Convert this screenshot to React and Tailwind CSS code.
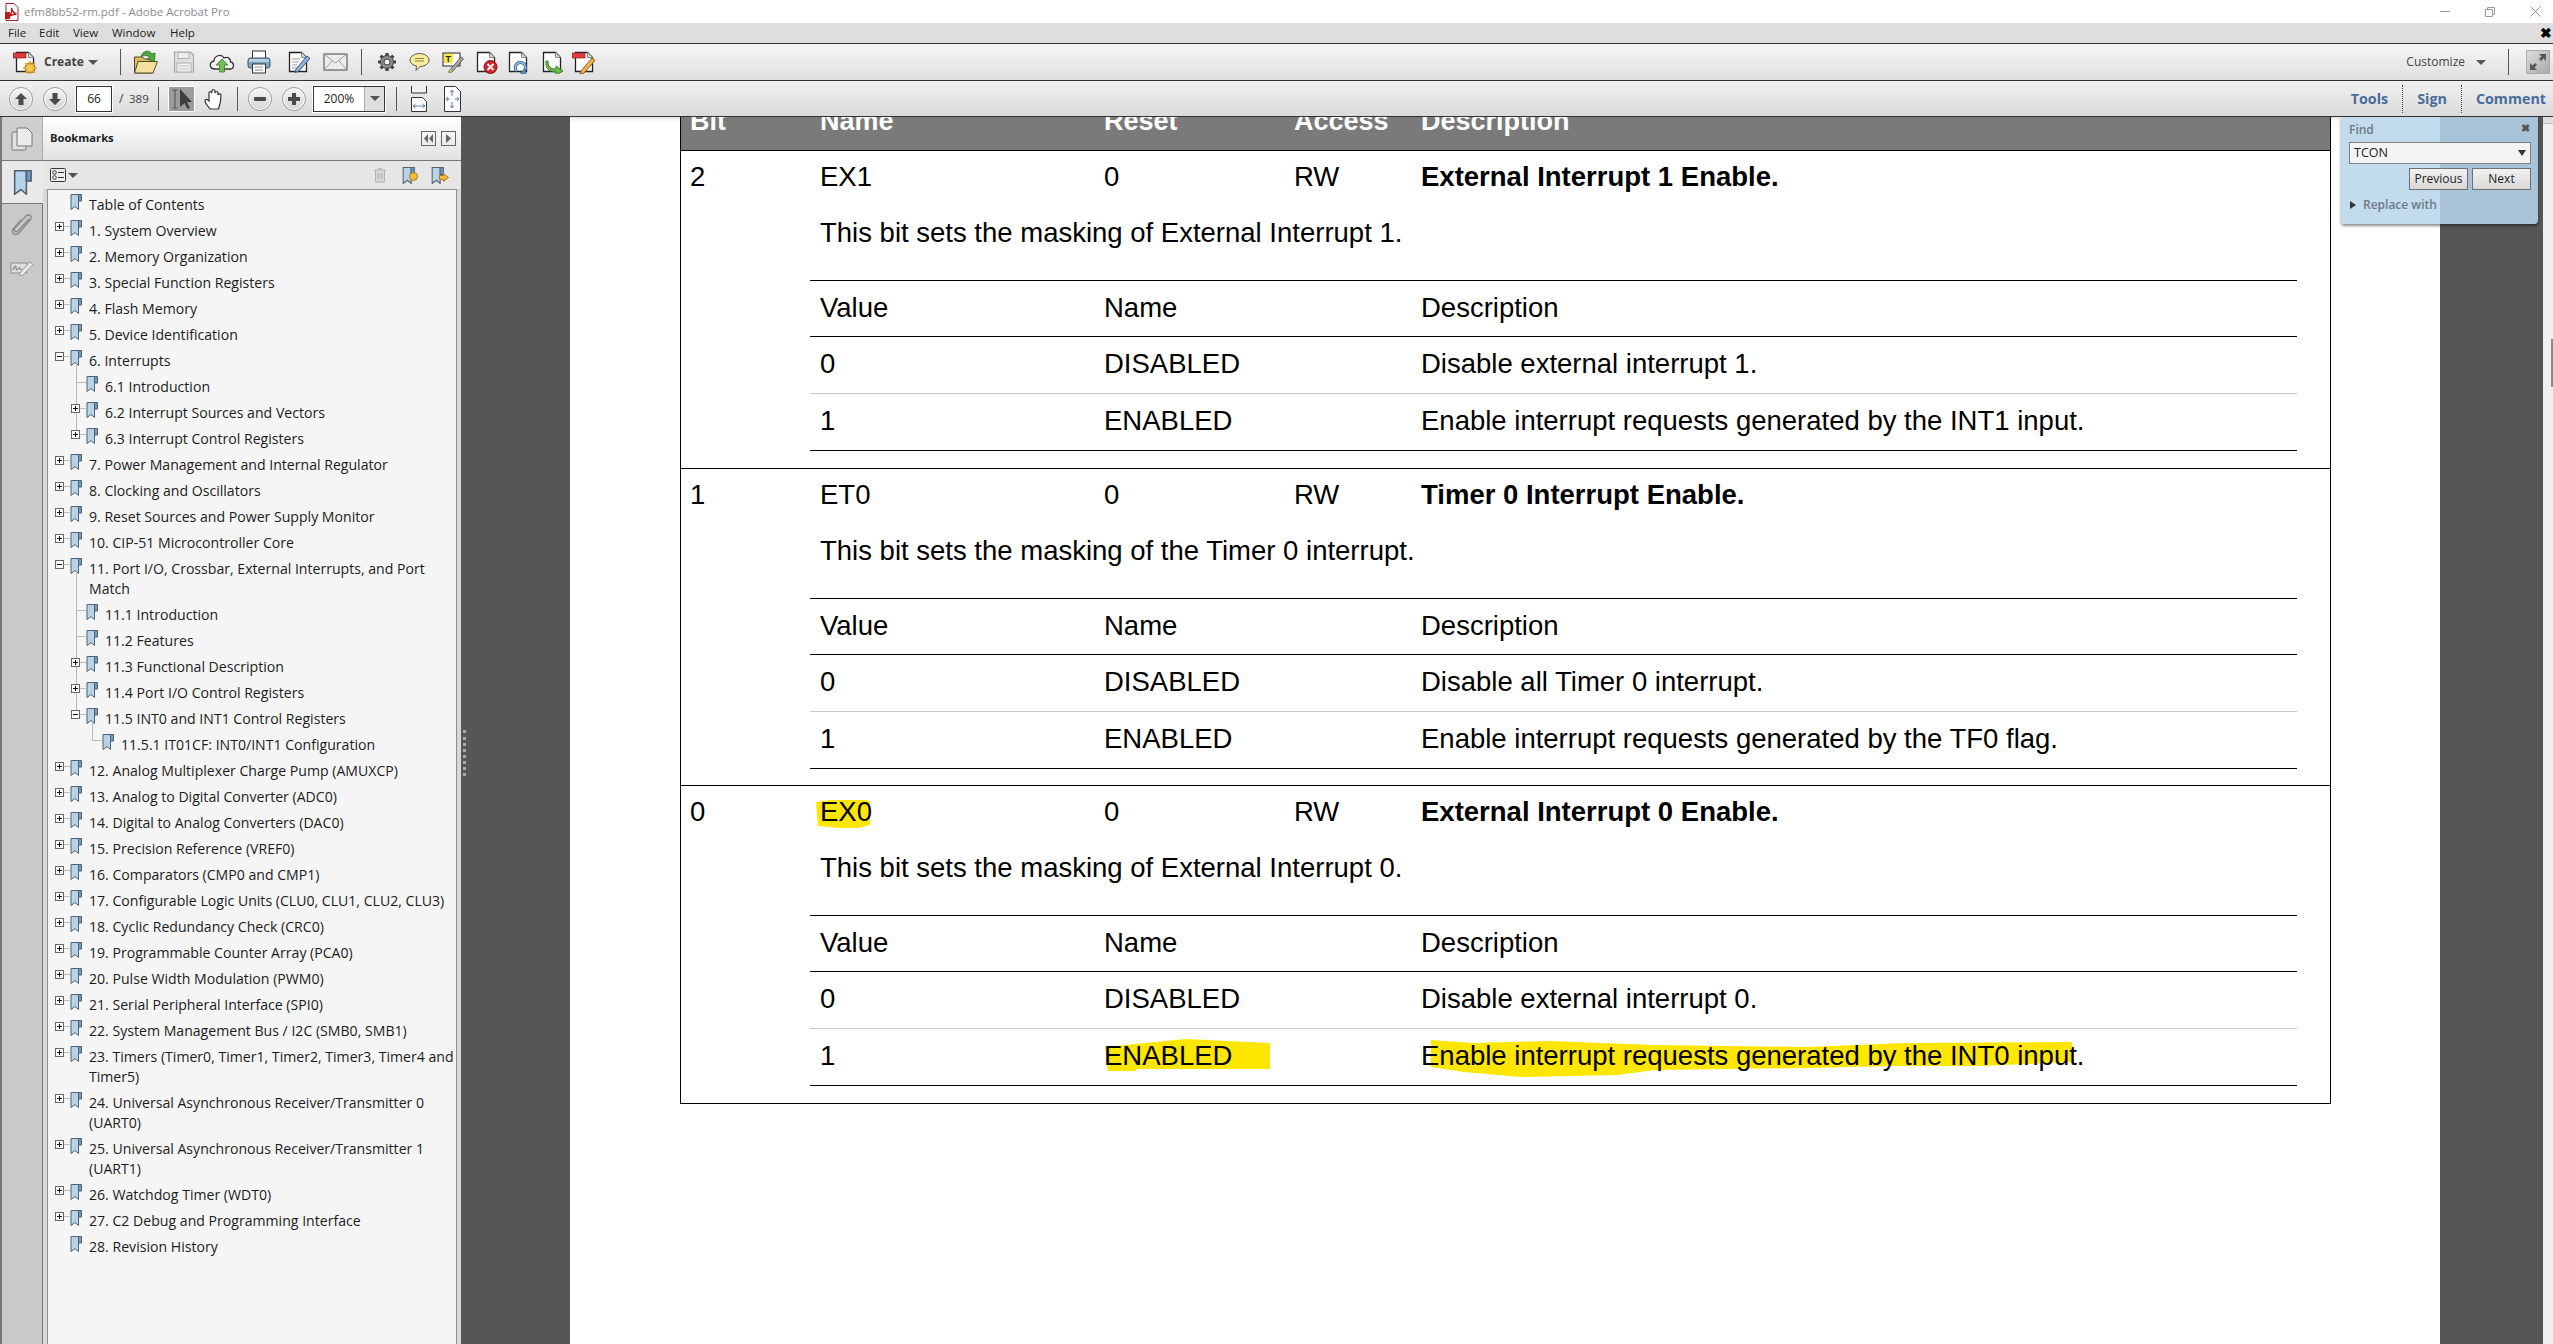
import React from 'react';

const ui = "font-['Open_Sans','Noto_Sans',sans-serif]";

const Doc = ({ children, w = 24, h = 24, className = '' }) => (
  <svg width={w} height={h} viewBox="0 0 24 24" className={className}>
    <path d="M3.5 2.5h12l5 5v14h-17z" fill="#fff" stroke="#222" strokeWidth="1.3" />
    <path d="M15.5 2.5v5h5" fill="#ddd" stroke="#888" strokeWidth="1" />
    {children}
  </svg>
);

const PdfLogo = () => (
  <svg width="14" height="18" viewBox="0 0 14 18">
    <path d="M1 .5h8l4 4v13H1z" fill="#fff" stroke="#a02020" />
    <path d="M3 14c3-2 4-6 3.5-9 .6 3 2 5 5 6-3 0-5 1-8.500 3z" fill="none" stroke="#c01818" strokeWidth="1.300" />
    <rect x="0" y="9" width="5" height="7" fill="#b81c1c" />
  </svg>
);

const CreateIcon = () => (
  <Doc>
    <rect x="0" y="3" width="13" height="5" fill="#e23b3b" stroke="#8a1d1d" strokeWidth=".7" />
    <circle cx="17" cy="18" r="5" fill="#e9a92c" stroke="#9a6a10" />
    <path d="M17 11v14M10 18h14M12 13l10 10M22 13 12 23" stroke="#e9a92c" strokeWidth="1.500" />
    <circle cx="17" cy="18" r="3.500" fill="#f5c556" />
  </Doc>
);

const FolderIcon = () => (
  <svg width="26" height="26" viewBox="0 0 26 26">
    <path d="M1.500 8h8l2 2h8v14H1.500z" fill="#d9b96a" stroke="#5b4a22" />
    <path d="M1.500 24 5 12.500h19.500L20 24z" fill="#f3dfa0" stroke="#5b4a22" />
    <path d="M8 8c1-6 8-8 11-3l3-1-.500 9-7.500-3 2.500-1.500C15 6 11 6 8 8z" fill="#4fa63a" stroke="#2c6b20" strokeWidth=".8" />
  </svg>
);

const SaveIcon = () => (
  <svg width="22" height="24" viewBox="0 0 22 24">
    <path d="M1.500 2h16l3 3v17h-19z" fill="#dedede" stroke="#a8a8a8" strokeWidth="1.200" />
    <rect x="5" y="2.500" width="11" height="6" fill="#eee" stroke="#b0b0b0" />
    <rect x="4" y="13" width="14" height="9" fill="#eee" stroke="#b0b0b0" />
    <path d="M6 16h10M6 19h10" stroke="#c4c4c4" />
  </svg>
);

const CloudIcon = () => (
  <svg width="26" height="22" viewBox="0 0 26 22">
    <path d="M6 18c-6 0-6-7-1-8 0-5 7-8 10-3 4-2 7 1 6.500 4 4 .5 4 7-.5 7z" fill="#f4f4f4" stroke="#333" strokeWidth="1.300" />
    <path d="M13 8l6 6h-3.500v7h-5v-7H7z" fill="#6fc04f" stroke="#3b7d28" strokeWidth=".8" />
  </svg>
);

const PrintIcon = () => (
  <svg width="24" height="24" viewBox="0 0 24 24">
    <rect x="5.500" y="1" width="13" height="8" fill="#fff" stroke="#333" />
    <rect x="1" y="8" width="22" height="10" rx="2.500" fill="#7ea4c4" stroke="#38536c" />
    <rect x="2" y="9" width="20" height="3" rx="1" fill="#b7cfe2" />
    <rect x="5.500" y="14" width="13" height="9" fill="#fff" stroke="#333" />
    <path d="M8 17h8M8 20h8" stroke="#888" />
  </svg>
);

const EditDocIcon = () => (
  <Doc>
    <path d="M6 9h8M6 12h6M6 15h5M6 18h5" stroke="#999" />
    <path d="M10 19 21 6l3 2.500L13 21l-4 1.500z" fill="#8db4d8" stroke="#2d4f72" strokeWidth=".9" />
  </Doc>
);

const MailIcon = () => (
  <svg width="25" height="20" viewBox="0 0 25 20">
    <rect x="1" y="2" width="23" height="16" fill="#ededed" stroke="#444" />
    <path d="m1 2 11.500 9L24 2M1 18l8-9M24 18l-8-9" fill="none" stroke="#9a9a9a" />
  </svg>
);

const GearIcon = () => (
  <svg width="20" height="22" viewBox="0 0 20 20">
    <g stroke="#444" strokeWidth="3.200">
      <path d="M10 1v18M1 10h18M3.600 3.600l12.800 12.800M16.400 3.600 3.600 16.400" />
    </g>
    <circle cx="10" cy="10" r="6.500" fill="#8a8a8a" stroke="#444" />
    <circle cx="10" cy="10" r="3" fill="#eee" stroke="#444" />
  </svg>
);

const BubbleIcon = () => (
  <svg width="21" height="20" viewBox="0 0 21 20">
    <path d="M10.500 1.500c5 0 9.500 3 9.500 6.500s-4 6.500-9 6.500L7 18.500l.5-4.500C4 13.500 1 11 1 8c0-3.500 4.500-6.500 9.500-6.500z" fill="#f9ec9a" stroke="#555" />
    <path d="M6 6.500h9M6 9h9" stroke="#8a7a30" />
  </svg>
);

const NoteIcon = () => (
  <svg width="22" height="22" viewBox="0 0 22 22">
    <rect x="1" y="2" width="17" height="13" fill="#fff" stroke="#222" />
    <rect x="2" y="3" width="9" height="9" fill="#f6e93a" />
    <text x="3.500" y="11" fontSize="9" fontWeight="700" fontFamily="Liberation Sans" fill="#222">T</text>
    <path d="M7 20 19 6l2.500 2L10 21l-3 1z" fill="#aaa" stroke="#444" strokeWidth=".8" />
    <path d="M7 22l1-3 2 2z" fill="#e8d43a" />
  </svg>
);

const DeleteDocIcon = () => (
  <Doc>
    <circle cx="16.500" cy="17" r="6.500" fill="#d4242c" stroke="#7a1016" />
    <path d="m13.500 14 6 6m0-6-6 6" stroke="#fff" strokeWidth="1.800" />
  </Doc>
);

const RotateDocIcon = () => (
  <Doc>
    <path d="M10.500 21c-3-4 0-9 4.500-8.500 4 .5 6 4.500 3.500 8" fill="none" stroke="#35608c" strokeWidth="3" />
    <path d="M10.500 21c-3-4 0-9 4.500-8.500 4 .5 6 4.500 3.500 8" fill="none" stroke="#9cc1e0" strokeWidth="1.400" />
    <path d="m14 23 5-4 1 5z" fill="#5d8dbb" stroke="#35608c" strokeWidth=".6" />
  </Doc>
);

const GreenArrowDocIcon = () => (
  <Doc>
    <path d="M8 11c0 6 3 8 8 8v-3l7 5-7 4v-3c-6 0-11-3-10-11z" fill="#6dba48" stroke="#33751f" strokeWidth=".9" />
  </Doc>
);

const RedPencilDocIcon = () => (
  <Doc>
    <rect x="0" y="3" width="13" height="5" fill="#e23b3b" stroke="#8a1d1d" strokeWidth=".7" />
    <path d="M9 21 20 8l3 2.500L12 23l-4 1z" fill="#f2b24a" stroke="#7a5012" strokeWidth=".9" />
  </Doc>
);

const CircleBtn = ({ children }) => (
  <span className="flex h-[24px] w-[24px] items-center justify-center rounded-full border border-[#9b9b9b] bg-gradient-to-b from-[#f6f6f6] to-[#d4d4d4] shadow-[inset_0_0_0_1px_#fff]">
    <svg width="16" height="16" viewBox="0 0 16 16" fill="#4a4a4a">{children}</svg>
  </span>
);

const Separator = ({ className = '' }) => <span className={`w-px bg-[#555] ${className}`} />;

const Caret = ({ className = '' }) => (
  <span className={`h-0 w-0 border-x-[5px] border-t-[5px] border-x-transparent border-t-[#555] ${className}`} />
);

const TitleBar = () => (
  <div className={`flex h-[23px] items-center bg-white pl-[5px] ${ui}`}>
    <PdfLogo />
    <span className="ml-[5px] text-[11.500px] text-[#8b8b8b]">efm8bb52-rm.pdf - Adobe Acrobat Pro</span>
    <div className="ml-auto flex items-center">
      <span className="h-px w-[10px] bg-[#999]" />
      <svg width="10" height="10" viewBox="0 0 10 10" className="ml-[35px]" fill="none" stroke="#999"><path d="M.5 2.500h7v7h-7zM2.500 2.500v-2h7v7h-2" /></svg>
      <svg width="11" height="11" viewBox="0 0 11 11" className="ml-[35px] mr-[12px]" stroke="#999"><path d="m.5.500 10 10m0-10-10 10" /></svg>
    </div>
  </div>
);

const MenuBar = () => (
  <div className={`flex h-[20px] items-center bg-[#dedede] text-[11.500px] text-[#222] ${ui}`}>
    <span className="ml-[8px] w-[31px]">File</span>
    <span className="w-[34px]">Edit</span>
    <span className="w-[39px]">View</span>
    <span className="w-[58px]">Window</span>
    <span>Help</span>
    <span className="ml-auto mr-[1px] text-[14px] font-bold leading-none text-black">✖</span>
  </div>
);

const MainToolbar = () => (
  <div className={`flex h-[38px] items-center border-y border-[#333] bg-gradient-to-b from-[#f6f6f6] to-[#dfdfdf] ${ui}`}>
    <span className="ml-[13px] flex"><CreateIcon /></span>
    <span className="ml-[7px] w-[39px] whitespace-nowrap text-[12px] font-bold text-[#444]">Create</span>
    <Caret className="ml-[5px]" />
    <Separator className="ml-[22px] h-[26px]" />
    <span className="ml-[12px] flex"><FolderIcon /></span>
    <span className="ml-[14px] flex"><SaveIcon /></span>
    <span className="ml-[14px] flex"><CloudIcon /></span>
    <span className="ml-[12px] flex"><PrintIcon /></span>
    <span className="ml-[15px] flex"><EditDocIcon /></span>
    <span className="ml-[13px] flex"><MailIcon /></span>
    <Separator className="ml-[13px] h-[26px]" />
    <span className="ml-[15px] flex"><GearIcon /></span>
    <span className="ml-[12px] flex"><BubbleIcon /></span>
    <span className="ml-[12px] flex"><NoteIcon /></span>
    <span className="ml-[10px] flex"><DeleteDocIcon /></span>
    <span className="ml-[8px] flex"><RotateDocIcon /></span>
    <span className="ml-[10px] flex"><GreenArrowDocIcon /></span>
    <span className="ml-[8px] flex"><RedPencilDocIcon /></span>
    <span className="ml-auto text-[12px] text-[#444]">Customize</span>
    <Caret className="ml-[11px]" />
    <Separator className="ml-[22px] h-[26px]" />
    <span className="ml-[17px] mr-[3px] flex h-[24px] w-[24px] items-center justify-center border border-[#aaa] bg-gradient-to-br from-[#ddd] to-[#aaa]">
      <svg width="18" height="18" viewBox="0 0 18 18" fill="#555">
        <path d="M10 1h7v7l-2.500-2.500L12 8l-2-2 2.500-2.500zM1 10l2.500 2.500L6 10l2 2-2.500 2.500L8 17H1z" />
      </svg>
    </span>
  </div>
);

const NavToolbar = () => (
  <div className={`flex h-[36px] items-center border-b border-[#333] bg-gradient-to-b from-[#f1f1f1] to-[#dadada] ${ui}`}>
    <span className="ml-[9px] flex">
      <CircleBtn><path d="M8 2l6 6h-3.500v6h-5V8H2z" /></CircleBtn>
    </span>
    <span className="ml-[10px] flex">
      <CircleBtn><path d="M8 14 2 8h3.500V2h5v6H14z" /></CircleBtn>
    </span>
    <span className="ml-[9px] flex h-[26px] w-[36px] items-center justify-center border border-[#333] bg-white text-[12px] text-[#222] shadow-[0_0_0_1px_#fff]">66</span>
    <span className="ml-[7px] w-[4px] text-[12px] text-[#444]">/</span>
    <span className="ml-[6px] w-[20px] whitespace-nowrap text-[11.500px] text-[#444]">389</span>
    <Separator className="ml-[9px] h-[24px]" />
    <span className="ml-[9px] flex h-[26px] w-[27px] items-center justify-center border border-white bg-[#9b9b9b]">
      <svg width="24" height="24" viewBox="0 0 24 24">
        <path d="M5 3v18M2.500 3h5M2.500 21h5" stroke="#555" fill="none" />
        <path d="M10 2v18l4.500-4 3 6 2.500-1-3-6h5z" fill="#3d3d3d" />
      </svg>
    </span>
    <span className="ml-[9px] flex">
      <svg width="20" height="24" viewBox="0 0 20 24" fill="#fff" stroke="#333" strokeWidth="1.200">
        <path d="M6 22c-2-3-5-6-5-8s2-2 3-1l1 1V6c0-2 2-2 2.500 0L8 4c0-2 2.500-2 3 0v2c.5-2 3-2 3 0v2c.5-1.500 3-1.500 3 .5 0 4-.5 8-2.500 13.500z" />
      </svg>
    </span>
    <Separator className="ml-[13px] h-[24px]" />
    <span className="ml-[10px] flex">
      <CircleBtn><rect x="2" y="6" width="12" height="4" rx="1" /></CircleBtn>
    </span>
    <span className="ml-[10px] flex">
      <CircleBtn><path d="M6 2h4v4h4v4h-4v4H6v-4H2V6h4z" /></CircleBtn>
    </span>
    <span className="ml-[7px] flex h-[26px] w-[72px] border border-[#333] bg-white shadow-[0_0_0_1px_#fff]">
      <span className="flex w-[50px] items-center justify-center text-[12px] text-[#222]">200%</span>
      <span className="flex flex-1 items-center justify-center border-l border-[#aaa] bg-[#dedede]"><Caret /></span>
    </span>
    <Separator className="ml-[11px] h-[24px]" />
    <span className="ml-[14px] flex flex-col">
      <svg width="16" height="26" viewBox="0 0 16 26">
        <path d="M.5 0v7h15V0" fill="#f0f0f0" stroke="#333" />
        <path d="M.5 11.500h11l4 4v10H.5z" fill="#fff" stroke="#333" />
        <path d="M2 20h12M2 20l2.500-2M2 20l2.500 2M14 20l-2.500-2M14 20l-2.500 2" stroke="#5d7cb4" fill="none" />
      </svg>
    </span>
    <span className="ml-[17px] flex">
      <svg width="17" height="26" viewBox="0 0 17 26">
        <path d="M.5.500h11l5 5v20H.5z" fill="#fff" stroke="#333" />
        <path d="M8 4v6M8 4 6 6.500M8 4l2 2.500M8 22v-6m0 6-2-2.500M8 22l2-2.500M2 13h4m-4 0 2-2m-2 2 2 2M15 13h-4m4 0-2-2m2 2-2 2" stroke="#5d7cb4" fill="none" />
      </svg>
    </span>
    <div className="ml-auto flex h-full items-center text-[14.300px] font-bold text-[#4a6c9c]">
      <span>Tools</span>
      <span className="ml-[14px] h-[28px] border-l border-dotted border-[#444]" />
      <span className="ml-[14px]">Sign</span>
      <span className="ml-[14px] h-[28px] border-l border-dotted border-[#444]" />
      <span className="ml-[14px] mr-[7px]">Comment</span>
    </div>
  </div>
);

const Bookmark = ({ w = 12, h = 16 }) => (
  <svg width={w} height={h} viewBox="0 0 12 16" className="shrink-0">
    <path d="M1 .5h7.500v15L5 12.500 1 15.500z" fill="#b7d3ea" stroke="#54616e" />
    <path d="M8.500.500h3v6.500h-3z" fill="#6a9cc9" stroke="#54616e" />
  </svg>
);

const rows = [
  { t: 'Table of Contents' },
  { t: '1. System Overview', e: '+' },
  { t: '2. Memory Organization', e: '+' },
  { t: '3. Special Function Registers', e: '+' },
  { t: '4. Flash Memory', e: '+' },
  { t: '5. Device Identification', e: '+' },
  { t: '6. Interrupts', e: '-', open: true },
  { t: '6.1 Introduction', l: 1, sib: true },
  { t: '6.2 Interrupt Sources and Vectors', l: 1, e: '+', sib: true },
  { t: '6.3 Interrupt Control Registers', l: 1, e: '+', last: true },
  { t: '7. Power Management and Internal Regulator', e: '+' },
  { t: '8. Clocking and Oscillators', e: '+' },
  { t: '9. Reset Sources and Power Supply Monitor', e: '+' },
  { t: '10. CIP-51 Microcontroller Core', e: '+' },
  { t: '11. Port I/O, Crossbar, External Interrupts, and Port', t2: 'Match', e: '-', open: true },
  { t: '11.1 Introduction', l: 1, sib: true },
  { t: '11.2 Features', l: 1, sib: true },
  { t: '11.3 Functional Description', l: 1, e: '+', sib: true },
  { t: '11.4 Port I/O Control Registers', l: 1, e: '+', sib: true },
  { t: '11.5 INT0 and INT1 Control Registers', l: 1, e: '-', last: true, open: true },
  { t: '11.5.1 IT01CF: INT0/INT1 Configuration', l: 2, last: true },
  { t: '12. Analog Multiplexer Charge Pump (AMUXCP)', e: '+' },
  { t: '13. Analog to Digital Converter (ADC0)', e: '+' },
  { t: '14. Digital to Analog Converters (DAC0)', e: '+' },
  { t: '15. Precision Reference (VREF0)', e: '+' },
  { t: '16. Comparators (CMP0 and CMP1)', e: '+' },
  { t: '17. Configurable Logic Units (CLU0, CLU1, CLU2, CLU3)', e: '+' },
  { t: '18. Cyclic Redundancy Check (CRC0)', e: '+' },
  { t: '19. Programmable Counter Array (PCA0)', e: '+' },
  { t: '20. Pulse Width Modulation (PWM0)', e: '+' },
  { t: '21. Serial Peripheral Interface (SPI0)', e: '+' },
  { t: '22. System Management Bus / I2C (SMB0, SMB1)', e: '+' },
  { t: '23. Timers (Timer0, Timer1, Timer2, Timer3, Timer4 and', t2: 'Timer5)', e: '+' },
  { t: '24. Universal Asynchronous Receiver/Transmitter 0', t2: '(UART0)', e: '+' },
  { t: '25. Universal Asynchronous Receiver/Transmitter 1', t2: '(UART1)', e: '+' },
  { t: '26. Watchdog Timer (WDT0)', e: '+' },
  { t: '27. C2 Debug and Programming Interface', e: '+' },
  { t: '28. Revision History' },
];

const indent = ['pl-[7px]', 'pl-[23px]', 'pl-[39px]'];
const stemLeft = ['left-[28px]', 'left-[28px]', 'left-[44px]'];
const trunkLeft = ['left-[28px]', 'left-[44px]', 'left-[60px]'];

const TreeRow = ({ t, t2, e, l = 0, sib, last, open }) => (
  <div className={`relative flex ${indent[l]}`}>
    {(sib || last) && (
      <span className={`absolute top-0 w-px bg-[#bbb] ${stemLeft[l]} ${last ? 'h-[9px]' : 'h-full'}`} />
    )}
    {open && <span className={`absolute bottom-0 top-[17px] w-px bg-[#bbb] ${trunkLeft[l]}`} />}
    <div className="relative mt-[2px] h-[16px] w-[15px] shrink-0">
      {(e || l > 0) && <span className={`absolute top-[6px] h-px bg-[#bbb] ${e ? 'left-[9px] w-[6px]' : 'left-[5px] w-[10px]'}`} />}
      {e && (
        <span className="absolute left-0 top-[2px] flex h-[9px] w-[9px] items-center justify-center border border-[#666] bg-white">
          <svg width="7" height="7" viewBox="0 0 7 7" stroke="#111">
            <path d="M1 3.500h5" />
            {e === '+' && <path d="M3.500 1v5" />}
          </svg>
        </span>
      )}
    </div>
    <div className="relative z-10 mt-[2px]"><Bookmark /></div>
    <div className="ml-[7px] whitespace-nowrap py-[3px] text-[14.100px] leading-[20px] text-[#1c1c1c]">
      {t}
      {t2 && <div>{t2}</div>}
    </div>
  </div>
);

const RailIcons = {
  pages: (
    <svg width="22" height="24" viewBox="0 0 22 24" fill="#e2e2e2" stroke="#777">
      <rect x="1" y="5" width="14" height="18" rx="1" />
      <path d="M6 1h10l5 5v13H6z" fill="#ececec" />
    </svg>
  ),
  clip: (
    <svg width="22" height="24" viewBox="0 0 22 24" fill="none" stroke="#8d8d8d" strokeWidth="1.500">
      <path d="M18 6 7 18c-2 2-5-1-3-3L15 3c3-3 7 1 4 4L8 20c-4 4-9-1-5-5l7-8" />
    </svg>
  ),
  sign: (
    <svg width="24" height="16" viewBox="0 0 24 16" fill="none">
      <rect x="1" y="3" width="16" height="10" fill="#ddd" stroke="#8d8d8d" />
      <path d="M3 10c2-5 3-5 3-2s2 2 3 0 0 3 3 1" stroke="#666" />
      <path d="M10 13 20 2l3 2.500L13 15l-3 1z" fill="#eaeaea" stroke="#999" />
    </svg>
  ),
};

const Sidebar = () => (
  <div className={`flex w-[461px] shrink-0 bg-[#d8d8d8] ${ui}`}>
    <div className="flex w-[43px] shrink-0 flex-col border-l-2 border-[#777] bg-[#c9c9c9]">
      <div className="flex h-[43px] items-center justify-center border-r border-[#aaa] bg-[#cecece]">{RailIcons.pages}</div>
      <div className="flex h-[44px] items-center justify-center border-y border-[#777] bg-[#e9e9e9]">
        <Bookmark w={19} h={25} />
      </div>
      <div className="flex flex-1 flex-col items-center border-r border-[#777]">
        <span className="mt-[9px] flex">{RailIcons.clip}</span>
        <span className="mt-[23px] flex">{RailIcons.sign}</span>
      </div>
    </div>
    <div className="flex min-w-0 flex-1 flex-col">
      <div className="flex h-[44px] items-center border-b border-[#777] bg-gradient-to-b from-white to-[#e2e2e2] pl-[7px]">
        <span className="text-[11.200px] font-bold text-[#222]">Bookmarks</span>
        <span className="ml-auto flex h-[15px] w-[15px] items-center justify-center border border-[#666]">
          <svg width="9" height="9" viewBox="0 0 9 9" fill="#666"><path d="M4 0v9L0 4.500zM9 0v9L5 4.500z" /></svg>
        </span>
        <span className="ml-[5px] mr-[5px] flex h-[15px] w-[15px] items-center justify-center border border-[#666]">
          <svg width="9" height="9" viewBox="0 0 9 9" fill="#666"><path d="M2 0v9l5-4.500z" /></svg>
        </span>
      </div>
      <div className="flex h-[28px] items-center bg-[#e6e6e6] pl-[7px]">
        <svg width="16" height="14" viewBox="0 0 16 14" fill="#eee" stroke="#333">
          <rect x=".5" y=".5" width="15" height="13" rx="1" />
          <circle cx="4.500" cy="4.500" r="1.800" fill="none" />
          <circle cx="4.500" cy="9.500" r="1.800" fill="none" />
          <path d="M8 4.500h6M8 9.500h6" />
        </svg>
        <Caret className="ml-[2px] border-x-[3px] border-t-[3px] border-t-[#222]" />
        <svg width="14" height="16" viewBox="0 0 14 16" className="ml-auto" fill="#d8d8d8" stroke="#b4b4b4">
          <path d="M5 1.500h4M1 3h12M2.500 3v12h9V3M5 6v6M7 6v6M9 6v6" />
        </svg>
        <span className="relative ml-[15px] flex">
          <Bookmark w={13} h={17} />
          <span className="absolute -right-[3px] top-[5px] h-[9px] w-[9px] rounded-full border border-[#a87b1c] bg-[#f0b93f]" />
        </span>
        <span className="relative ml-[16px] mr-[17px] flex">
          <Bookmark w={13} h={17} />
          <svg width="10" height="9" viewBox="0 0 10 9" className="absolute -right-[5px] top-[6px]" fill="#f0b93f" stroke="#a87b1c">
            <path d="M.5 2.500h4V.5l5 4-5 4V6.500h-4z" />
          </svg>
        </span>
      </div>
      <div className="mr-[4px] ml-[4px] flex-1 overflow-hidden border-x border-t border-[#8f8f8f] bg-[#f5f5f5] pt-[2px]">
        {rows.map((r) => <TreeRow key={r.t} {...r} />)}
      </div>
    </div>
  </div>
);

const Wobble = ({ d }) => <path d={d} fill="#ffe600" />;

const SubRow = ({ value, name, desc, className = '', children }) => (
  <div className={`relative grid h-[57px] grid-cols-[284px_317px_1fr] items-center pb-[2px] pl-[10px] ${className}`}>
    {children}
    <span className="relative">{value}</span>
    <span className="relative">{name}</span>
    <span className="relative">{desc}</span>
  </div>
);

const BitRow = ({ bit, name, title, para, off, on, rowClass, nameMark, lastMark }) => (
  <div className={`box-border border-t border-black pt-[9px] text-[27.500px] ${rowClass}`}>
    <div className="grid h-[34px] grid-cols-[130px_284px_190px_127px_1fr] items-center pl-[9px]">
      <span>{bit}</span>
      <span className="relative">
        {nameMark && (
          <svg className="absolute left-0 top-0 h-full w-full overflow-visible">
            <Wobble d="M-4 7 L10 5 H44 L50 6 V30 L38 33 H20 L-2 31 L-3 20 Z" />
          </svg>
        )}
        <span className="relative">{name}</span>
      </span>
      <span>0</span>
      <span>RW</span>
      <span className="font-bold">{title}</span>
    </div>
    <div className="mt-[22px] pl-[139px] leading-[34px]">{para}</div>
    <div className="ml-[129px] mt-[30px] w-[1487px] border-b border-black">
      <SubRow value="Value" name="Name" desc="Description" className="!h-[56px] border-t border-black" />
      <SubRow value="0" name="DISABLED" desc={off} className="border-t border-black" />
      <SubRow value="1" name="ENABLED" desc={on} className="border-t border-[#c8c8c8]">
        {lastMark && (
          <svg className="absolute left-0 top-0 h-full w-full overflow-visible">
            <Wobble d="M295 18 L376 10 L460 14 V40 H326 V42 H298 Z" />
            <Wobble d="M621 11 L663 14 L740 12 L845 16 L998 18 L1046 16 L1094 14 L1262 13 V33 L1170 37 L1084 37 L998 39 L845 41 L807 46 L711 48 L654 43 L621 38 Z" />
          </svg>
        )}
      </SubRow>
    </div>
  </div>
);

const FindPanel = () => (
  <div className={`absolute left-[2341px] top-[117px] z-20 h-[107px] w-[197px] rounded-b-[4px] bg-[linear-gradient(to_right,#c2dcee_99px,#a9c4d8_99px)] shadow-[0_2px_3px_rgba(0,0,0,0.45)] ${ui}`}>
    <span className="absolute left-[8px] top-[4px] text-[12px] font-semibold text-[#6f7a84]">Find</span>
    <span className="absolute right-[8px] top-[5px] text-[11px] font-bold leading-none text-[#555]">✖</span>
    <div className="absolute left-[8px] top-[25px] flex h-[22px] w-[182px] items-center justify-between border border-[#808080] bg-[#f4f4f4] pl-[4px] pr-[4px] text-[12.500px] text-[#222]">
      TCON
      <span className="h-0 w-0 border-x-[4px] border-t-[6px] border-x-transparent border-t-[#333]" />
    </div>
    <div className="absolute right-[7px] top-[51px] flex gap-[4px] text-[12px] text-[#222]">
      <span className="flex h-[22px] w-[59px] items-center justify-center border border-[#707070] bg-gradient-to-b from-[#f2f2f2] to-[#d8d8d8]">Previous</span>
      <span className="flex h-[22px] w-[59px] items-center justify-center border border-[#707070] bg-gradient-to-b from-[#f2f2f2] to-[#d8d8d8]">Next</span>
    </div>
    <span className="absolute left-[9px] top-[84px] h-0 w-0 border-y-[4px] border-l-[6px] border-y-transparent border-l-[#333]" />
    <span className="absolute left-[22px] top-[79px] text-[12px] font-semibold text-[#6f7a84]">Replace with</span>
  </div>
);

const Page = () => (
  <div className="h-full w-[1870px] shrink-0 overflow-hidden bg-white shadow-[inset_0_5px_4px_-3px_rgba(0,0,0,0.12)] font-['Liberation_Sans',Arial,sans-serif] text-[27px] leading-[34px] text-black">
    <div className="ml-[110px] w-[1651px] border-x border-b border-black">
      <div className="-mt-[13px] grid h-[46px] grid-cols-[130px_284px_190px_127px_1fr] bg-[#7b7a7b] pl-[9px] font-bold text-white">
        <span>Bit</span>
        <span>Name</span>
        <span>Reset</span>
        <span>Access</span>
        <span>Description</span>
      </div>
      <BitRow
        rowClass="h-[318px]"
        bit="2"
        name="EX1"
        title="External Interrupt 1 Enable."
        para="This bit sets the masking of External Interrupt 1."
        off="Disable external interrupt 1."
        on="Enable interrupt requests generated by the INT1 input."
      />
      <BitRow
        rowClass="h-[317px]"
        bit="1"
        name="ET0"
        title="Timer 0 Interrupt Enable."
        para="This bit sets the masking of the Timer 0 interrupt."
        off="Disable all Timer 0 interrupt."
        on="Enable interrupt requests generated by the TF0 flag."
      />
      <BitRow
        rowClass="h-[318px]"
        bit="0"
        name="EX0"
        title="External Interrupt 0 Enable."
        para="This bit sets the masking of External Interrupt 0."
        off="Disable external interrupt 0."
        on="Enable interrupt requests generated by the INT0 input."
        nameMark
        lastMark
      />
    </div>
  </div>
);

export default function App() {
  return (
    <div className="relative flex h-screen w-full flex-col overflow-hidden bg-[#565656]">
      <TitleBar />
      <MenuBar />
      <MainToolbar />
      <NavToolbar />
      <div className="flex min-h-0 flex-1">
        <Sidebar />
        <div className="flex min-w-0 flex-1 bg-[#565656]">
          <div className="flex w-[109px] shrink-0 items-center justify-start pl-[2px]">
            <span className="mt-[44px] h-[46px] w-[3px] border-l-[3px] border-dotted border-[#a8a8a8]" />
          </div>
          <Page />
          <div className="ml-auto flex w-[10px] shrink-0 flex-col bg-[#f0f0f0]">
            <span className="h-[7px] border-b border-[#bbb] bg-[#dedede]" />
            <span className="ml-[8px] mt-[215px] h-[48px] w-[2px] bg-[#888]" />
          </div>
        </div>
      </div>
      <FindPanel />
    </div>
  );
}
